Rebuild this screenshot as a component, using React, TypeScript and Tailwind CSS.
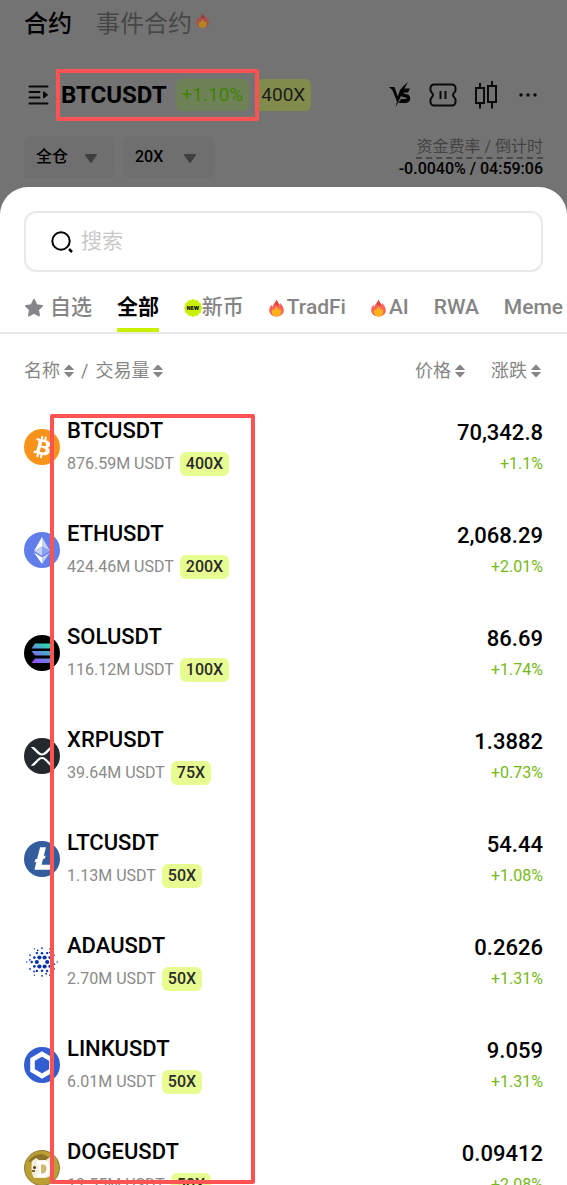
import React from "react";

const Flame: React.FC<{ className?: string; dim?: boolean }> = ({ className, dim }) => (
  <svg viewBox="0 0 16 18" className={className} aria-hidden="true">
    <path
      d="M7.8 0C8.5 2 10 3.2 10.8 5.6c.7-.4 1-1.2 1-2 2 2 4 4.700 4 8C15.800 15.500 12.400 18 8 18S.2 15.500.2 11.500C.2 9 1.300 7 2.600 5.400c.2 1 .6 1.700 1.200 2C4.300 4.500 7.300 3.200 7.800 0z"
      fill={dim ? "#a8504a" : "#f8665a"}
    />
    <path d="M7.8 0C8.500 2 10 3.200 10.800 5.600L9.500 7 6 5.300C7 3.600 7.600 2 7.800 0z" fill={dim ? "#943a3c" : "#e2453f"} />
    <path
      d="M8 7.200c.6 1.600 2 2.400 2.600 3.800.4-.2.700-.6.800-1.200 1 1 1.800 2.300 1.600 4C12.800 16.300 10.800 18 8 18s-4.800-1.700-5-4.200c0-1.400.6-2.700 1.500-3.700.2.600.5 1 1 1.200C5.700 9.600 7.600 9 8 7.200z"
      fill={dim ? "#b58522" : "#ffb31a"}
    />
  </svg>
);

const SortArrows: React.FC = () => (
  <svg viewBox="0 0 10 14" className="h-[14px] w-[10px]" fill="#858585" aria-hidden="true">
    <path d="M5 .6 9.600 5.200q.6.8-.4.800H.8q-1 0-.4-.8z" />
    <path d="M5 13.400.4 8.800Q-.2 8 .8 8h8.400q1 0 .4.800z" />
  </svg>
);

const NewBadge: React.FC = () => (
  <svg viewBox="0 0 18 18" className="h-[18px] w-[18px]" aria-hidden="true">
    <circle cx="9" cy="9" r="7.700" fill="#c8f000" />
    {Array.from({ length: 12 }, (_, i) => {
      const a = (i * Math.PI) / 6;
      return <circle key={i} cx={9 + 7 * Math.cos(a)} cy={9 + 7 * Math.sin(a)} r="2" fill="#c8f000" />;
    })}
    <text x="9" y="11" textAnchor="middle" fontSize="5" fontWeight="900" fontFamily="Inter, sans-serif" fill="#111">
      NEW
    </text>
  </svg>
);

const BtcLogo = () => (
  <svg viewBox="0 0 32 32" className="size-9">
    <circle cx="16" cy="16" r="16" fill="#f7931a" />
    <path
      fill="#fff"
      d="M23.189 14.020c.314-2.096-1.283-3.223-3.465-3.975l.708-2.840-1.728-.43-.69 2.765c-.454-.114-.92-.22-1.385-.326l.695-2.783L15.596 6l-.708 2.839c-.376-.086-.746-.17-1.104-.26l.002-.009-2.384-.595-.46 1.846s1.283.294 1.256.312c.7.175.826.638.805 1.006l-.806 3.235c.048.012.11.030.18.057l-.183-.045-1.130 4.532c-.086.212-.303.531-.793.41.018.025-1.256-.313-1.256-.313l-.858 1.978 2.250.561c.418.105.828.215 1.231.318l-.715 2.872 1.727.43.708-2.840c.472.127.93.245 1.378.357l-.706 2.828 1.728.43.715-2.866c2.948.558 5.164.333 6.097-2.333.752-2.146-.037-3.385-1.588-4.192 1.130-.26 1.980-1.003 2.207-2.538zm-3.950 5.538c-.533 2.147-4.148.986-5.320.695l.95-3.805c1.172.293 4.929.872 4.370 3.110zm.535-5.569c-.487 1.953-3.495.96-4.470.717l.86-3.450c.975.243 4.118.696 3.610 2.733z"
    />
  </svg>
);

const EthLogo = () => (
  <svg viewBox="0 0 36 36" className="size-9">
    <circle cx="18" cy="18" r="18" fill="#627eea" />
    <path fill="#c7d1f8" d="M18 5v9.600l8 4.400z" />
    <path fill="#fff" d="M18 5l-8 14 8-4.400z" />
    <path fill="#8ea2f0" d="M18 23.700l8-4.700-8-4.400z" />
    <path fill="#c7d1f8" d="M10 19l8 4.700v-9.100z" />
    <path fill="#fff" d="M10 20.600L18 32v-6.700z" />
    <path fill="#c7d1f8" d="M18 25.300V32l8-11.400z" />
  </svg>
);

const SolLogo = () => (
  <svg viewBox="0 0 36 36" className="size-9">
    <defs>
      <linearGradient id="sol" gradientUnits="userSpaceOnUse" x1="26" y1="7" x2="11" y2="29">
        <stop offset="0" stopColor="#19f5a1" />
        <stop offset=".5" stopColor="#5a95d8" />
        <stop offset="1" stopColor="#9945ff" />
      </linearGradient>
    </defs>
    <circle cx="18" cy="18" r="18" fill="#000" />
    <path fill="url(#sol)" d="M11 8.500h18.500l-4 5H7.500zM7.500 16h18l4 4.500H11zM11 23.500h18.500l-4 4.500H7.500z" />
  </svg>
);

const XrpLogo = () => (
  <svg viewBox="0 0 32 32" className="size-9">
    <circle cx="16" cy="16" r="16" fill="#23292f" />
    <path
      fill="#fff"
      d="M23.070 8h2.890l-6.015 5.957a5.621 5.621 0 01-7.890 0L6.035 8H8.930l4.570 4.523a3.556 3.556 0 004.996 0L23.070 8zM8.895 24.563H6l6.055-5.993a5.621 5.621 0 017.890 0L26 24.563h-2.895L18.500 20a3.556 3.556 0 00-4.996 0l-4.610 4.563z"
    />
  </svg>
);

const LtcLogo = () => (
  <svg viewBox="0 0 32 32" className="size-9">
    <circle cx="16" cy="16" r="16" fill="#345d9d" />
    <path
      fill="#fff"
      d="M11 18.500L9.300 19.200l.7-2.700 1.700-.7L14.300 5.500h5.200l-2 8 1.700-.7-.7 2.700-1.700.7-1.100 4.800h8.200L22.900 25.500H9.300z"
    />
  </svg>
);

const adaRings = [
  { r: 5.200, n: 6, size: 2.100, start: 0 },
  { r: 8.800, n: 6, size: 1.300, start: 30 },
  { r: 10.300, n: 6, size: 1.200, start: 0 },
  { r: 13.800, n: 6, size: 0.9, start: 30 },
  { r: 12.400, n: 6, size: 0.9, start: 10 },
  { r: 15.200, n: 6, size: 0.7, start: 0 },
];

const AdaLogo = () => (
  <svg viewBox="0 0 36 36" className="size-9">
    {adaRings.map((ring) =>
      Array.from({ length: ring.n }, (_, i) => {
        const a = ((ring.start + (i * 360) / ring.n) * Math.PI) / 180;
        return (
          <circle
            key={`${ring.r}-${i}`}
            cx={18 + ring.r * Math.cos(a)}
            cy={18 + ring.r * Math.sin(a)}
            r={ring.size}
            fill="#0033ad"
          />
        );
      })
    )}
  </svg>
);

const LinkLogo = () => (
  <svg viewBox="0 0 36 36" className="size-9">
    <circle cx="18" cy="18" r="18" fill="#335dd2" />
    <path fill="none" stroke="#fff" strokeWidth="4.600" d="M18 7l9.500 5.500v11L18 29l-9.500-5.500v-11z" />
  </svg>
);

const DogeLogo = () => (
  <svg viewBox="0 0 36 36" className="size-9">
    <circle cx="18" cy="18" r="17.500" fill="#ba9f33" stroke="#8f7c3c" />
    <path fill="#8b7328" d="M4 12c3-5 8-8 14-8l9 4-4 2-13 1z" />
    <path fill="#f4eedc" d="M8 11l4-3 3 2h7l4-3 2 5v9c0 5-4 7-8 7H10c-2.500-4-3-10-2-17z" />
    <path fill="#fff" d="M13 11h6c5 0 7 3 7 7s-2 9-7 9h-6v-3l2-1v-8l-2-1z" />
    <path fill="#d0b873" d="M17 14.500h2c2.500 0 3.500 1.500 3.500 4S21 23.500 19 23.500h-2z" />
    <circle cx="10.500" cy="17.500" r="1.500" fill="#4a3b20" />
    <path fill="#7b6430" d="M8 20h3v2H8z" />
  </svg>
);

const markets = [
  { symbol: "BTCUSDT", volume: "876.59M USDT", leverage: "400X", price: "70,342.8", change: "+1.1%", Logo: BtcLogo },
  { symbol: "ETHUSDT", volume: "424.46M USDT", leverage: "200X", price: "2,068.29", change: "+2.01%", Logo: EthLogo },
  { symbol: "SOLUSDT", volume: "116.12M USDT", leverage: "100X", price: "86.69", change: "+1.74%", Logo: SolLogo },
  { symbol: "XRPUSDT", volume: "39.64M USDT", leverage: "75X", price: "1.3882", change: "+0.73%", Logo: XrpLogo },
  { symbol: "LTCUSDT", volume: "1.13M USDT", leverage: "50X", price: "54.44", change: "+1.08%", Logo: LtcLogo },
  { symbol: "ADAUSDT", volume: "2.70M USDT", leverage: "50X", price: "0.2626", change: "+1.31%", Logo: AdaLogo },
  { symbol: "LINKUSDT", volume: "6.01M USDT", leverage: "50X", price: "9.059", change: "+1.31%", Logo: LinkLogo },
  { symbol: "DOGEUSDT", volume: "12.55M USDT", leverage: "50X", price: "0.09412", change: "+2.08%", Logo: DogeLogo },
];

const HeaderSelect: React.FC<{ label: string; value: string }> = ({ label, value }) => (
  <div className="relative">
    <select
      aria-label={label}
      className="h-[42px] w-[91px] appearance-none rounded-md bg-[#6f6f6f] pl-3 text-base font-medium text-black"
    >
      <option>{value}</option>
    </select>
    <svg viewBox="0 0 12 9" className="pointer-events-none absolute top-[18px] right-[18px] h-[9px] w-3" fill="#3f3f42">
      <path d="M1 0h10q1.300.2.700 1.400L7 8.200q-1 1.200-2 0L.3 1.400Q-.3.2 1 0z" />
    </svg>
  </div>
);

const Header: React.FC = () => (
  <header className="px-6 pb-2">
    <nav className="flex h-12 items-center gap-6 text-2xl">
      <a href="#futures" className="font-medium text-black">
        合约
      </a>
      <a href="#events" className="flex items-center gap-1 text-[#474747]">
        事件合约
        <Flame dim className="mb-2 h-[15px] w-[13px]" />
      </a>
    </nav>

    <div className="mt-[22px] flex h-[50px] items-center justify-between">
      <div className="flex items-center">
        <button aria-label="切换合约" className="mr-3 ml-1">
          <svg viewBox="0 0 21 20" className="h-5 w-[21px]" fill="none" stroke="#080808" strokeWidth="2" strokeLinecap="round">
            <path d="M1.500 1.500h18M1.500 7h10M1.500 12.500h10M1.500 18.500h18" />
            <path d="M15.500 7v6l4-3z" fill="#080808" strokeWidth="1" strokeLinejoin="round" />
          </svg>
        </button>
        <div className="relative flex items-center gap-[9px]">
          <h1 className="text-2xl font-bold text-black">BTCUSDT</h1>
          <span className="flex h-8 items-center rounded-md bg-[#6f8257] px-[6px] text-[19px] text-[#3f8200]">+1.10%</span>
          <div className="pointer-events-none absolute -inset-x-[5px] -inset-y-[10px] -right-[10px] rounded-xs border-4 border-[#ff5353]" />
        </div>
        <span className="ml-[6px] flex h-8 items-center rounded-md bg-[#818c4c] px-[6px] text-[19px] text-[#1c1c1c]">400X</span>
      </div>

      <div className="flex items-center gap-[18px] pr-[6px]">
        <button aria-label="对战">
          <svg viewBox="0 0 22 26" className="h-[26px] w-[22px]" fill="#050505">
            <path d="M0 5h5.500l3.300 9.500L11 8l3-3.500L19 0l-3.500 6.500-2 4.300L9.300 20 6.500 25.500 8 19.500 3.300 8z" />
            <path d="M21 6.500l-2 4h-3.500c-1.300 0-1.300 1 0 1.300l2.500.5c5 1 4 8.700-1.500 8.700H9.500L12 17h4.500c1.500 0 1.500-1.200 0-1.500l-2.500-.5c-4.500-1-3-8.500 2-8.500z" />
          </svg>
        </button>
        <button aria-label="卡券">
          <svg viewBox="0 0 28 24" className="h-6 w-7" fill="none" stroke="#0a0a0a" strokeWidth="2">
            <path d="M5 1.500h18a3.500 3.500 0 013.500 3.500v2.500c0 1.500-2.500 2.500-2.500 4.500s2.500 3 2.500 4.500V19a3.500 3.500 0 01-3.500 3.500H5A3.500 3.500 0 011.500 19v-2.500C1.500 15 4 14 4 12S1.500 9 1.500 7.500V5A3.500 3.500 0 015 1.500z" />
            <path d="M11.500 8v8M16.500 8v8" />
          </svg>
        </button>
        <button aria-label="K线图">
          <svg viewBox="0 0 22 28" className="h-7 w-[22px]" fill="none" stroke="#0a0a0a" strokeWidth="2">
            <path d="M1 7h8v15H1zM5 2v5M5 22v5.500M13 5h8v16h-8zM17 0v5M17 21v6.500" />
          </svg>
        </button>
        <button aria-label="更多" className="ml-1">
          <svg viewBox="0 0 18 4" className="h-1 w-[18px]" fill="#0a0a0a">
            <circle cx="2" cy="2" r="1.700" />
            <circle cx="9" cy="2" r="1.700" />
            <circle cx="16" cy="2" r="1.700" />
          </svg>
        </button>
      </div>
    </div>

    <div className="mt-4 flex justify-between">
      <div className="flex gap-2">
        <HeaderSelect label="保证金模式" value="全仓" />
        <HeaderSelect label="杠杆" value="20X" />
      </div>
      <div className="flex flex-col items-end text-base">
        <span className="border-b-2 border-dashed border-[#484848] leading-[21px] text-[#434343]">资金费率 / 倒计时</span>
        <span className="leading-5 font-medium text-black">-0.0040% / 04:59:06</span>
      </div>
    </div>
  </header>
);

const tabs = [
  { name: "自选", icon: "star" },
  { name: "全部", active: true },
  { name: "新币", icon: "new" },
  { name: "TradFi", icon: "flame" },
  { name: "AI", icon: "flame" },
  { name: "RWA" },
  { name: "Meme" },
];

const MarketTabs: React.FC = () => (
  <nav className="flex h-[62px] shrink-0 justify-between gap-5 overflow-hidden border-b-2 border-[#e8e8e8] pr-1 pl-6 text-[21px]">
    {tabs.map((tab) => (
      <button
        key={tab.name}
        className={
          tab.active
            ? "flex shrink-0 items-center border-b-4 border-[#c8f000] pt-4 font-bold text-black"
            : "flex shrink-0 items-center border-b-4 border-transparent pt-4 font-medium text-[#858585]"
        }
      >
        {tab.icon === "star" && (
          <svg viewBox="0 0 20 20" className="mr-[6px] size-5" fill="#85858a" stroke="#85858a" strokeWidth="2" strokeLinejoin="round">
            <path d="M10 2l2.400 5.200 5.600.7-4.100 3.900 1.100 5.700-5-2.800-5 2.800 1.100-5.700L2 7.900l5.600-.7z" />
          </svg>
        )}
        {tab.icon === "new" && <NewBadge />}
        {tab.icon === "flame" && <Flame className="mr-[3px] h-[18px] w-[15px]" />}
        {tab.name}
      </button>
    ))}
  </nav>
);

const MarketTable: React.FC = () => (
  <div className="relative min-h-0 flex-1">
    <div className="h-full overflow-y-auto [scrollbar-width:none]">
      <table className="w-full">
        <thead>
          <tr className="h-[61px] text-lg text-[#858585]">
            <th className="pt-3 pl-6 font-normal">
              <div className="flex items-center gap-[7px]">
                <button className="flex items-center gap-1">
                  名称
                  <SortArrows />
                </button>
                <span>/</span>
                <button className="flex items-center gap-1">
                  交易量
                  <SortArrows />
                </button>
              </div>
            </th>
            <th className="pt-3 pr-6 font-normal">
              <div className="flex items-center justify-end gap-[26px] pr-[2px]">
                <button className="flex items-center gap-1">
                  价格
                  <SortArrows />
                </button>
                <button className="flex items-center gap-1">
                  涨跌
                  <SortArrows />
                </button>
              </div>
            </th>
          </tr>
        </thead>
        <tbody>
          {markets.map(({ symbol, volume, leverage, price, change, Logo }) => (
            <tr key={symbol} className="h-[103px]">
              <td className="pl-6">
                <div className="flex items-center gap-[7px]">
                  <Logo />
                  <div className="flex flex-col gap-[7px]">
                    <span className="text-[22px] leading-7 font-medium text-black">{symbol}</span>
                    <div className="flex items-center gap-[6px] text-base leading-6">
                      <span className="text-[#8a8a8a]">{volume}</span>
                      <span className="rounded-md bg-[#e8fd91] px-[6px] font-medium text-[#2b2b2b]">{leverage}</span>
                    </div>
                  </div>
                </div>
              </td>
              <td className="pr-6">
                <div className="flex flex-col items-end gap-[7px]">
                  <span className="text-[22px] leading-7 font-medium text-black">{price}</span>
                  <span className="text-base leading-5 text-[#76b91b]">{change}</span>
                </div>
              </td>
            </tr>
          ))}
        </tbody>
      </table>
    </div>
    <div className="pointer-events-none absolute top-20 bottom-px left-[50px] w-[205px] rounded-xs border-4 border-[#ff5353]" />
  </div>
);

const App: React.FC = () => {
  return (
    <div className="flex h-screen flex-col overflow-hidden bg-[#737373] font-[Roboto,'Noto_Sans_CJK_SC',sans-serif]">
      <Header />
      <main className="flex min-h-0 flex-1 flex-col rounded-t-[28px] bg-white pt-6">
        <label className="mx-6 flex h-[61px] shrink-0 items-center gap-2 rounded-xl border-2 border-[#e9e9e9] pl-[25px]">
          <svg viewBox="0 0 22 22" className="size-[22px]" fill="none" stroke="#000" strokeWidth="2">
            <circle cx="10" cy="10" r="8.700" />
            <path d="M18 18l3 3" strokeWidth="2.500" />
          </svg>
          <input
            type="search"
            aria-label="搜索"
            placeholder="搜索"
            className="min-w-0 flex-1 bg-transparent text-[21px] text-black outline-none placeholder:text-[#c9c9c9]"
          />
        </label>
        <MarketTabs />
        <MarketTable />
      </main>
    </div>
  );
};

export default App;
